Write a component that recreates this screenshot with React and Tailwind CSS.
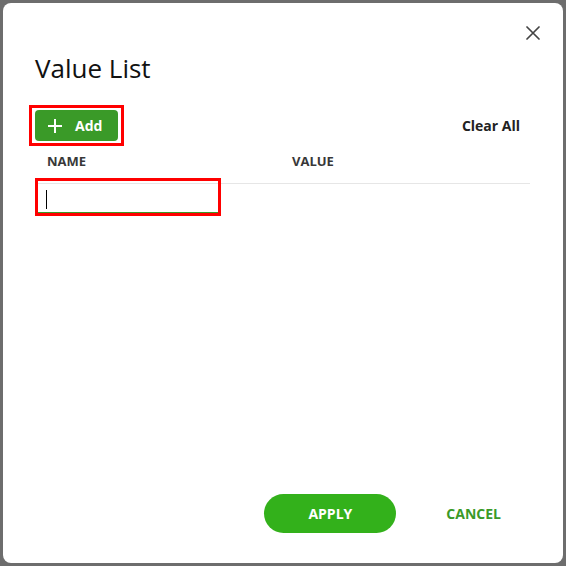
import React, { useState } from 'react';

const font = { fontFamily: '"Open Sans", "Noto Sans", sans-serif' };

const App = () => {
    const [name, setName] = useState('');

    return (
        <div className="w-[566px] h-[566px] bg-[#6d6d6d] p-[3px]" style={font}>
            <div className="h-full bg-white rounded-lg flex flex-col">
                {/* close */}
                <div className="flex justify-end mt-[23px] mr-[23px] h-[14px]">
                    <button className="w-[14px] h-[14px] text-[#444]">
                        <svg width="14" height="14" viewBox="0 0 14 14" fill="none" stroke="currentColor" strokeWidth="1.7" strokeLinecap="round">
                            <path d="M1 1L13 13M13 1L1 13" />
                        </svg>
                    </button>
                </div>

                <h2 className="ml-[32px] mt-[10px] text-[26px] leading-[36px] font-normal text-[#111]">Value List</h2>

                <div className="mt-[19px] ml-[26px] mr-[43px] flex items-center justify-between">
                    <div className="border-[3px] border-[#ff0000] px-[3px] py-[2px]">
                        <button className="w-[83px] h-[31px] rounded bg-[#3a9a28] text-white flex items-center pl-[13px]">
                            <svg width="14" height="14" viewBox="0 0 14 14" fill="none" stroke="currentColor" strokeWidth="2">
                                <path d="M7 0V14M0 7H14" />
                            </svg>
                            <span className="ml-[13px] text-[14px] font-bold leading-none">Add</span>
                        </button>
                    </div>
                    <button className="text-[14px] font-bold text-[#222]">Clear All</button>
                </div>

                <div className="ml-[32px] mr-[33px]">
                    <div className="grid grid-cols-[245px_1fr] border-b border-[#e6e6e6] pt-[7px] pb-[14px] text-[13px] leading-[16px] font-bold text-[#383838]">
                        <div className="pl-3">NAME</div>
                        <div className="pl-3">VALUE</div>
                    </div>
                    <div className="relative ml-[3px] w-[180px] h-[30px] border-b-2 border-[#3a9a28] flex items-center pl-[8px]">
                        <input
                            value={name}
                            onChange={(e) => setName(e.target.value)}
                            className="w-full h-full outline-none text-[14px] text-[#111] bg-transparent"
                        />
                        {!name && <span className="absolute left-[8px] top-[6px] w-px h-[19px] bg-black" />}
                        <span className="absolute -left-[3px] -right-[3px] -top-[6px] -bottom-[4px] border-[3px] border-[#ff0000] pointer-events-none" />
                    </div>
                </div>

                <div className="mt-auto mb-[30px] mr-[62px] flex items-center justify-end gap-[50px]">
                    <button className="w-[132px] h-[39px] rounded-full bg-[#33b11b] text-white text-[14px] font-bold">APPLY</button>
                    <button className="text-[14px] font-bold text-[#3a9a28]">CANCEL</button>
                </div>
            </div>
        </div>
    );
};

export default App;
